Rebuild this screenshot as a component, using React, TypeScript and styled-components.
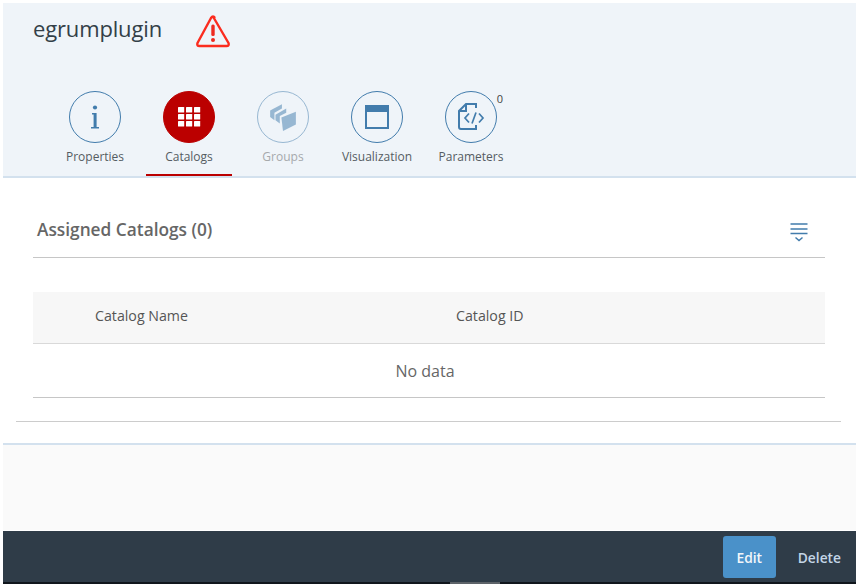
import React from 'react';
import styled, {createGlobalStyle} from 'styled-components';

const GlobalStyle = createGlobalStyle`
  html, body {
    margin: 0;
    padding: 0;
    background: #ffffff;
  }
  body {
    font-family: "Open Sans", "Liberation Sans", sans-serif;
    overflow: hidden;
  }
`;

const Page = styled.div`
  width: 856px;
  height: 584px;
  box-sizing: border-box;
  padding: 3px 0 0 3px;
  display: flex;
  flex-direction: column;
`;

const Header = styled.header`
  height: 175px;
  box-sizing: border-box;
  background: #eff4f9;
  border-bottom: 2px solid #d3e1ee;
  display: flex;
  flex-direction: column;
`;

const TitleRow = styled.div`
  height: 88px;
  box-sizing: border-box;
  padding: 8px 0 0 30px;
  display: flex;
  align-items: flex-start;
  gap: 33px;
`;

const Title = styled.h1`
  margin: 0;
  font-size: 22px;
  font-weight: 400;
  line-height: 34px;
  color: #333f48;
  letter-spacing: -0.15px;
`;

const WarningIcon = styled.svg`
  width: 36px;
  height: 34px;
  margin-top: 3px;
`;

const Tabs = styled.nav`
  display: flex;
  gap: 8px;
  padding-left: 49px;
`;

const Tab = styled.div<{$active?: boolean}>`
  width: 86px;
  height: 85px;
  box-sizing: border-box;
  display: flex;
  flex-direction: column;
  align-items: center;
  position: relative;
  border-bottom: 2px solid ${p => (p.$active ? '#bb0000' : 'transparent')};
`;

const Circle = styled.div<{$active?: boolean; $disabled?: boolean}>`
  width: 52px;
  height: 52px;
  box-sizing: border-box;
  border-radius: 50%;
  border: 1.5px solid ${p => (p.$active ? '#bb0000' : '#427cac')};
  background: ${p => (p.$active ? '#bb0000' : 'transparent')};
  opacity: ${p => (p.$disabled ? 0.5 : 1)};
  display: flex;
  align-items: center;
  justify-content: center;
`;

const TabLabel = styled.span<{$disabled?: boolean}>`
  margin-top: 6px;
  font-size: 12px;
  line-height: 16px;
  color: ${p => (p.$disabled ? '#a6a9ac' : '#555c62')};
  white-space: nowrap;
`;

const Badge = styled.span`
  position: absolute;
  top: 1px;
  right: 11px;
  font-size: 11px;
  line-height: 14px;
  color: #444444;
`;

const Content = styled.main`
  height: 266px;
  box-sizing: border-box;
  padding: 0 15px 0 13px;
  display: flex;
  flex-direction: column;
`;

const Section = styled.section`
  padding-left: 17px;
  margin-right: 16px;
  display: flex;
  flex-direction: column;
`;

const SectionHead = styled.div`
  height: 80px;
  box-sizing: border-box;
  border-bottom: 1px solid #c6c6c6;
  padding: 24px 16px 0 4px;
  display: flex;
  align-items: center;
  justify-content: space-between;
`;

const SectionTitle = styled.h2`
  margin: 0;
  font-size: 17.3px;
  font-weight: 600;
  color: #666666;
`;

const SortIcon = styled.svg`
  width: 20px;
  height: 22px;
  position: relative;
  top: 2px;
`;

const Table = styled.div`
  margin-top: 34px;
  font-size: 14.2px;
  color: #555555;
`;

const TableHead = styled.div`
  height: 52px;
  box-sizing: border-box;
  background: #f7f7f7;
  border-bottom: 1px solid #d9d9d9;
  display: grid;
  grid-template-columns: 361px 1fr;
  padding: 0 0 5px 62px;
  align-items: center;
`;

const EmptyRow = styled.div`
  height: 54px;
  box-sizing: border-box;
  border-bottom: 1px solid #c6c6c6;
  padding-right: 8px;
  display: flex;
  align-items: center;
  justify-content: center;
  font-size: 16px;
  color: #666666;
`;

const ContentRule = styled.div`
  margin-top: 23px;
  height: 1px;
  background: #cccccc;
`;

const Band = styled.div`
  height: 87px;
  box-sizing: border-box;
  background: #fafafa;
  border-top: 2px solid #d3e1ee;
`;

const Footer = styled.footer`
  height: 53px;
  margin-top: 1px;
  box-sizing: border-box;
  background: #2f3c48;
  border-bottom: 2px solid #10161c;
  padding: 1px 15px 0 0;
  display: flex;
  align-items: center;
  justify-content: flex-end;
  gap: 22px;
  font-size: 13.8px;
  font-weight: 600;
  position: relative;
`;

const Handle = styled.span`
  position: absolute;
  left: 447px;
  bottom: -2px;
  width: 50px;
  height: 2px;
  background: #5d6369;
`;

const EditButton = styled.button`
  width: 53px;
  height: 42px;
  border: none;
  border-radius: 3px;
  background: #4a91c9;
  color: #f2f6fa;
  font: inherit;
  padding: 0;
`;

const DeleteButton = styled.button`
  border: none;
  background: none;
  color: #c3d5e6;
  font: inherit;
  padding: 0;
`;

const Warning = () => (
    <WarningIcon viewBox="0 0 36 34">
        <path d="M18 2.5 L33.5 29 Q34.5 32 31.5 32 L4.5 32 Q1.5 32 2.5 29 L16 4 Q18 1 20 4" fill="none" stroke="#fb2c1f" strokeWidth="2.4" strokeLinejoin="round"/>
        <rect x="16.3" y="10.5" width="3.4" height="11.5" rx="1.5" fill="#ee2a20"/>
        <circle cx="18" cy="26" r="2" fill="#ee2a20"/>
    </WarningIcon>
);

const InfoGlyph = () => (
    <svg width="26" height="30" viewBox="0 0 26 30">
        <circle cx="13" cy="5.5" r="2.1" fill="#427cac"/>
        <path d="M10 11h4.6v14h2.4v1.6h-8v-1.6h2.6v-12.400h-1.600z" fill="#427cac"/>
    </svg>
);

const GridGlyph = () => (
    <svg width="24" height="24" viewBox="0 0 24 24" fill="#ffffff">
        {[0, 1, 2].flatMap(r => [0, 1, 2].map(c => (
            <rect key={`${r}-${c}`} x={1 + c * 8} y={2 + r * 7} width="6.2" height="5.6" rx="0.6"/>
        )))}
    </svg>
);

const GroupsGlyph = () => (
    <svg width="30" height="30" viewBox="0 0 28 28" fill="#427cac">
        <path d="M2 8 L13 2 V6 L6 10 V17 L2 14z"/>
        <path d="M7 12 L17 6 V10 L11 13 V20 L7 17z"/>
        <path d="M12.500 14.500 L26 9 V21 L14 27z"/>
    </svg>
);

const WindowGlyph = () => (
    <svg width="24" height="24" viewBox="0 0 24 24">
        <rect x="1" y="1" width="22" height="22" fill="none" stroke="#427cac" strokeWidth="2"/>
        <rect x="1" y="1" width="22" height="6" fill="#427cac"/>
    </svg>
);

const CodeGlyph = () => (
    <svg width="28" height="30" viewBox="0 0 28 30" fill="none" stroke="#427cac" strokeWidth="2">
        <path d="M19 6 V2 H9 L2 9 V25 Q2 27 4 27 H19 V23"/>
        <path d="M9 2 V9 H2"/>
        <path d="M12 11.500 L8 16 L12 20.500 M22 11.500 L26 16 L22 20.500 M19 10.500 L15 21.500" strokeWidth="1.7"/>
    </svg>
);

const SortGlyph = () => (
    <SortIcon viewBox="0 0 20 22" fill="none" stroke="#427cac">
        <path d="M1.500 3h17M1.500 8h17M1.500 12.500h17" strokeWidth="1.5"/>
        <path d="M6.500 16.500L10 19.500l3.500-3" strokeWidth="1.500"/>
    </SortIcon>
);

const App = () => {
    return (
        <Page>
            <GlobalStyle/>
            <Header>
                <TitleRow>
                    <Title>egrumplugin</Title>
                    <Warning/>
                </TitleRow>
                <Tabs>
                    <Tab>
                        <Circle><InfoGlyph/></Circle>
                        <TabLabel>Properties</TabLabel>
                    </Tab>
                    <Tab $active>
                        <Circle $active><GridGlyph/></Circle>
                        <TabLabel>Catalogs</TabLabel>
                    </Tab>
                    <Tab>
                        <Circle $disabled><GroupsGlyph/></Circle>
                        <TabLabel $disabled>Groups</TabLabel>
                    </Tab>
                    <Tab>
                        <Circle><WindowGlyph/></Circle>
                        <TabLabel>Visualization</TabLabel>
                    </Tab>
                    <Tab>
                        <Circle><CodeGlyph/></Circle>
                        <Badge>0</Badge>
                        <TabLabel>Parameters</TabLabel>
                    </Tab>
                </Tabs>
            </Header>
            <Content>
                <Section>
                    <SectionHead>
                        <SectionTitle>Assigned Catalogs (0)</SectionTitle>
                        <SortGlyph/>
                    </SectionHead>
                    <Table>
                        <TableHead>
                            <span>Catalog Name</span>
                            <span>Catalog ID</span>
                        </TableHead>
                        <EmptyRow>No data</EmptyRow>
                    </Table>
                </Section>
                <ContentRule/>
            </Content>
            <Band/>
            <Footer>
                <EditButton>Edit</EditButton>
                <DeleteButton>Delete</DeleteButton>
                <Handle/>
            </Footer>
        </Page>
    );
};

export default App;
